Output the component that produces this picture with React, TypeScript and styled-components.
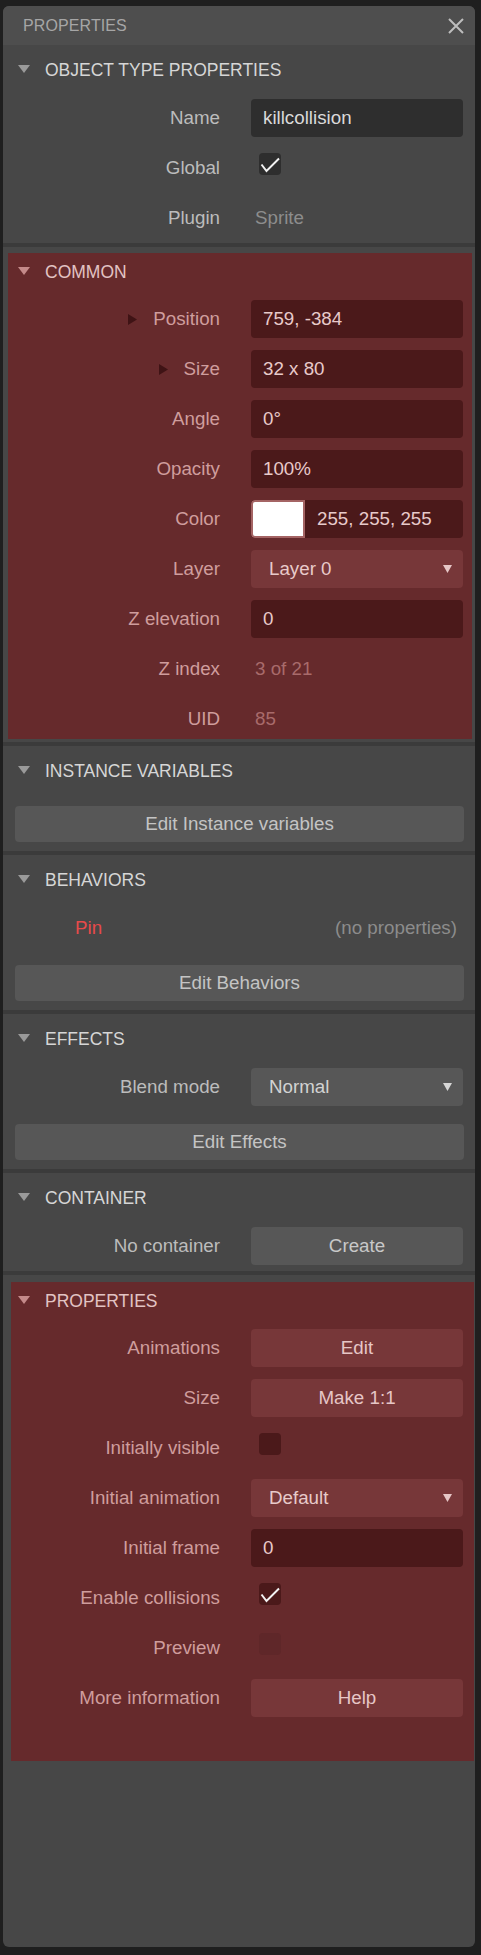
import React from 'react';
import styled, { createGlobalStyle } from 'styled-components';

type Tint = 'grey' | 'red';

const GlobalStyle = createGlobalStyle`
  html, body {
    margin: 0;
    padding: 0;
    background: #1f1f1f;
  }
  body {
    font-family: 'Liberation Sans', Arial, sans-serif;
  }
`;

const Panel = styled.div`
  display: flex;
  flex-direction: column;
  width: 472px;
  height: 1941px;
  margin: 6px 0 0 3px;
  background: #474747;
  border-radius: 6px;
  overflow: hidden;
`;

const TitleBar = styled.div`
  display: flex;
  align-items: center;
  justify-content: space-between;
  height: 39px;
  padding: 0 11px 0 20px;
  background: #4e4e4e;
  flex-shrink: 0;
`;

const Title = styled.span`
  font-size: 16px;
  color: #a6a6a6;
  letter-spacing: 0.1px;
`;

const Separator = styled.div`
  height: 4px;
  background: #3b3b3b;
  flex-shrink: 0;
`;

const Section = styled.section<{ $tint: Tint; $margin?: string; $pb?: number }>`
  flex-shrink: 0;
  background: ${(p) => (p.$tint === 'red' ? '#662a2c' : 'transparent')};
  margin: ${(p) => p.$margin ?? '0'};
  padding-top: ${(p) => (p.$tint === 'red' ? 0 : 2)}px;
  padding-bottom: ${(p) => p.$pb ?? 0}px;
`;

const SectionHeader = styled.div<{ $tint: Tint; $indent: number }>`
  display: flex;
  align-items: center;
  gap: 15px;
  height: ${(p) => (p.$tint === 'red' ? 38 : 46)}px;
  margin-bottom: ${(p) => (p.$tint === 'red' ? 3 : 0)}px;
  padding-left: ${(p) => p.$indent}px;
  font-size: 17.5px;
  color: ${(p) => (p.$tint === 'red' ? '#e2c3c3' : '#d6d6d6')};
  svg {
    margin-top: -2px;
  }
`;

const Rows = styled.div<{ $pr: number; $mb?: number }>`
  display: grid;
  grid-template-columns: 1fr 212px;
  grid-auto-rows: 50px;
  column-gap: 31px;
  align-items: center;
  padding-right: ${(p) => p.$pr}px;
  margin-bottom: ${(p) => p.$mb ?? 0}px;
`;

const Label = styled.div<{ $tint: Tint }>`
  display: flex;
  align-items: center;
  justify-content: flex-end;
  gap: 16px;
  font-size: 18.75px;
  white-space: nowrap;
  color: ${(p) => (p.$tint === 'red' ? '#cf9d9d' : '#bcbcbc')};
`;

const Field = styled.div<{ $tint: Tint }>`
  display: flex;
  align-items: center;
  height: 38px;
  padding-left: 12px;
  border-radius: 4px;
  font-size: 18.75px;
  background: ${(p) => (p.$tint === 'red' ? '#4b191a' : '#2e2e2e')};
  color: ${(p) => (p.$tint === 'red' ? '#e8caca' : '#dadada')};
`;

const ColorField = styled(Field)`
  padding-left: 0;
  gap: 12px;
  overflow: hidden;
`;

const Swatch = styled.div`
  width: 50px;
  height: 34px;
  background: #ffffff;
  border: 2px solid #a46464;
  border-radius: 4px 0 0 4px;
`;

const Dropdown = styled.div<{ $tint: Tint }>`
  display: flex;
  align-items: center;
  justify-content: space-between;
  height: 38px;
  padding: 0 11px 0 18px;
  border-radius: 4px;
  font-size: 18.75px;
  background: ${(p) => (p.$tint === 'red' ? '#773739' : '#575757')};
  color: ${(p) => (p.$tint === 'red' ? '#e8caca' : '#d2d2d2')};
`;

const Button = styled.div<{ $tint: Tint }>`
  display: flex;
  align-items: center;
  justify-content: center;
  height: 38px;
  border-radius: 4px;
  font-size: 18.75px;
  background: ${(p) => (p.$tint === 'red' ? '#773739' : '#575757')};
  color: ${(p) => (p.$tint === 'red' ? '#e6c6c6' : '#c8c8c8')};
`;

const WideButton = styled.div`
  display: flex;
  align-items: center;
  justify-content: center;
  height: 36px;
  margin: 12px 11px 9px 12px;
  border-radius: 4px;
  font-size: 18.75px;
  background: #575757;
  color: #c4c4c4;
`;

const Static = styled.div<{ $tint: Tint }>`
  padding-left: 4px;
  font-size: 18.75px;
  color: ${(p) => (p.$tint === 'red' ? '#a86b6b' : '#8d8d8d')};
`;

const Checkbox = styled.div<{ $tint: Tint; $disabled?: boolean }>`
  display: flex;
  width: 22px;
  height: 22px;
  margin: 0 0 8px 8px;
  border-radius: 4px;
  background: ${(p) =>
    p.$tint === 'red' ? (p.$disabled ? '#5f2729' : '#4b191a') : '#2e2e2e'};
`;

const BehaviorRow = styled.div`
  display: flex;
  align-items: center;
  justify-content: space-between;
  height: 50px;
  padding: 0 18px 0 72px;
  font-size: 18.75px;
`;

const BehaviorName = styled.span`
  color: #e64a4a;
`;

const NoProps = styled.span`
  color: #8c8c8c;
`;

const Caret = ({ color }: { color: string }) => (
  <svg width="12" height="8" viewBox="0 0 12 8">
    <polygon points="0,0 12,0 6,8" fill={color} />
  </svg>
);

const Expander = () => (
  <svg width="9" height="11" viewBox="0 0 9 11">
    <polygon points="0,0 9,5.5 0,11" fill="#3f1315" />
  </svg>
);

const DropArrow = ({ color }: { color: string }) => (
  <svg width="9" height="8" viewBox="0 0 9 8">
    <polygon points="0,0 9,0 4.5,8" fill={color} />
  </svg>
);

const Check = () => (
  <svg width="22" height="22" viewBox="0 0 22 22">
    <polyline points="2.5,11.5 7.5,18 20,5.5" fill="none" stroke="#f2f2f2" strokeWidth="2" />
  </svg>
);

const CloseIcon = () => (
  <svg width="16" height="16" viewBox="0 0 16 16">
    <path d="M1 1 L15 15 M15 1 L1 15" stroke="#bdbdbd" strokeWidth="2" />
  </svg>
);

const Header = ({ tint, indent, children }: { tint: Tint; indent: number; children: React.ReactNode }) => (
  <SectionHeader $tint={tint} $indent={indent}>
    <Caret color={tint === 'red' ? '#c48a8a' : '#9a9a9a'} />
    {children}
  </SectionHeader>
);

const App = () => {
  return (
    <>
      <GlobalStyle />
      <Panel>
        <TitleBar>
          <Title>PROPERTIES</Title>
          <CloseIcon />
        </TitleBar>

        <Section $tint="grey">
          <Header tint="grey" indent={15}>OBJECT TYPE PROPERTIES</Header>
          <Rows $pr={12}>
            <Label $tint="grey">Name</Label>
            <Field $tint="grey">killcollision</Field>
            <Label $tint="grey">Global</Label>
            <div>
              <Checkbox $tint="grey">
                <Check />
              </Checkbox>
            </div>
            <Label $tint="grey">Plugin</Label>
            <Static $tint="grey">Sprite</Static>
          </Rows>
        </Section>
        <Separator />

        <Section $tint="red" $margin="6px 3px 3px 5px">
          <Header tint="red" indent={10}>COMMON</Header>
          <Rows $pr={9} $mb={-5}>
            <Label $tint="red">
              <Expander />
              Position
            </Label>
            <Field $tint="red">759, -384</Field>
            <Label $tint="red">
              <Expander />
              Size
            </Label>
            <Field $tint="red">32 x 80</Field>
            <Label $tint="red">Angle</Label>
            <Field $tint="red">0°</Field>
            <Label $tint="red">Opacity</Label>
            <Field $tint="red">100%</Field>
            <Label $tint="red">Color</Label>
            <ColorField $tint="red">
              <Swatch />
              255, 255, 255
            </ColorField>
            <Label $tint="red">Layer</Label>
            <Dropdown $tint="red">
              Layer 0
              <DropArrow color="#e6c6c6" />
            </Dropdown>
            <Label $tint="red">Z elevation</Label>
            <Field $tint="red">0</Field>
            <Label $tint="red">Z index</Label>
            <Static $tint="red">3 of 21</Static>
            <Label $tint="red">UID</Label>
            <Static $tint="red">85</Static>
          </Rows>
        </Section>
        <Separator />

        <Section $tint="grey">
          <Header tint="grey" indent={15}>INSTANCE VARIABLES</Header>
          <WideButton>Edit Instance variables</WideButton>
        </Section>
        <Separator />

        <Section $tint="grey">
          <Header tint="grey" indent={15}>BEHAVIORS</Header>
          <BehaviorRow>
            <BehaviorName>Pin</BehaviorName>
            <NoProps>(no properties)</NoProps>
          </BehaviorRow>
          <WideButton>Edit Behaviors</WideButton>
        </Section>
        <Separator />

        <Section $tint="grey">
          <Header tint="grey" indent={15}>EFFECTS</Header>
          <Rows $pr={12}>
            <Label $tint="grey">Blend mode</Label>
            <Dropdown $tint="grey">
              Normal
              <DropArrow color="#d6d6d6" />
            </Dropdown>
          </Rows>
          <WideButton>Edit Effects</WideButton>
        </Section>
        <Separator />

        <Section $tint="grey">
          <Header tint="grey" indent={15}>CONTAINER</Header>
          <Rows $pr={12}>
            <Label $tint="grey">No container</Label>
            <Button $tint="grey">Create</Button>
          </Rows>
        </Section>
        <Separator />

        <Section $tint="red" $margin="7px 1px 0 8px" $pb={38}>
          <Header tint="red" indent={7}>PROPERTIES</Header>
          <Rows $pr={11}>
            <Label $tint="red">Animations</Label>
            <Button $tint="red">Edit</Button>
            <Label $tint="red">Size</Label>
            <Button $tint="red">Make 1:1</Button>
            <Label $tint="red">Initially visible</Label>
            <div>
              <Checkbox $tint="red" />
            </div>
            <Label $tint="red">Initial animation</Label>
            <Dropdown $tint="red">
              Default
              <DropArrow color="#e6c6c6" />
            </Dropdown>
            <Label $tint="red">Initial frame</Label>
            <Field $tint="red">0</Field>
            <Label $tint="red">Enable collisions</Label>
            <div>
              <Checkbox $tint="red">
                <Check />
              </Checkbox>
            </div>
            <Label $tint="red">Preview</Label>
            <div>
              <Checkbox $tint="red" $disabled />
            </div>
            <Label $tint="red">More information</Label>
            <Button $tint="red">Help</Button>
          </Rows>
        </Section>
      </Panel>
    </>
  );
};

export default App;
